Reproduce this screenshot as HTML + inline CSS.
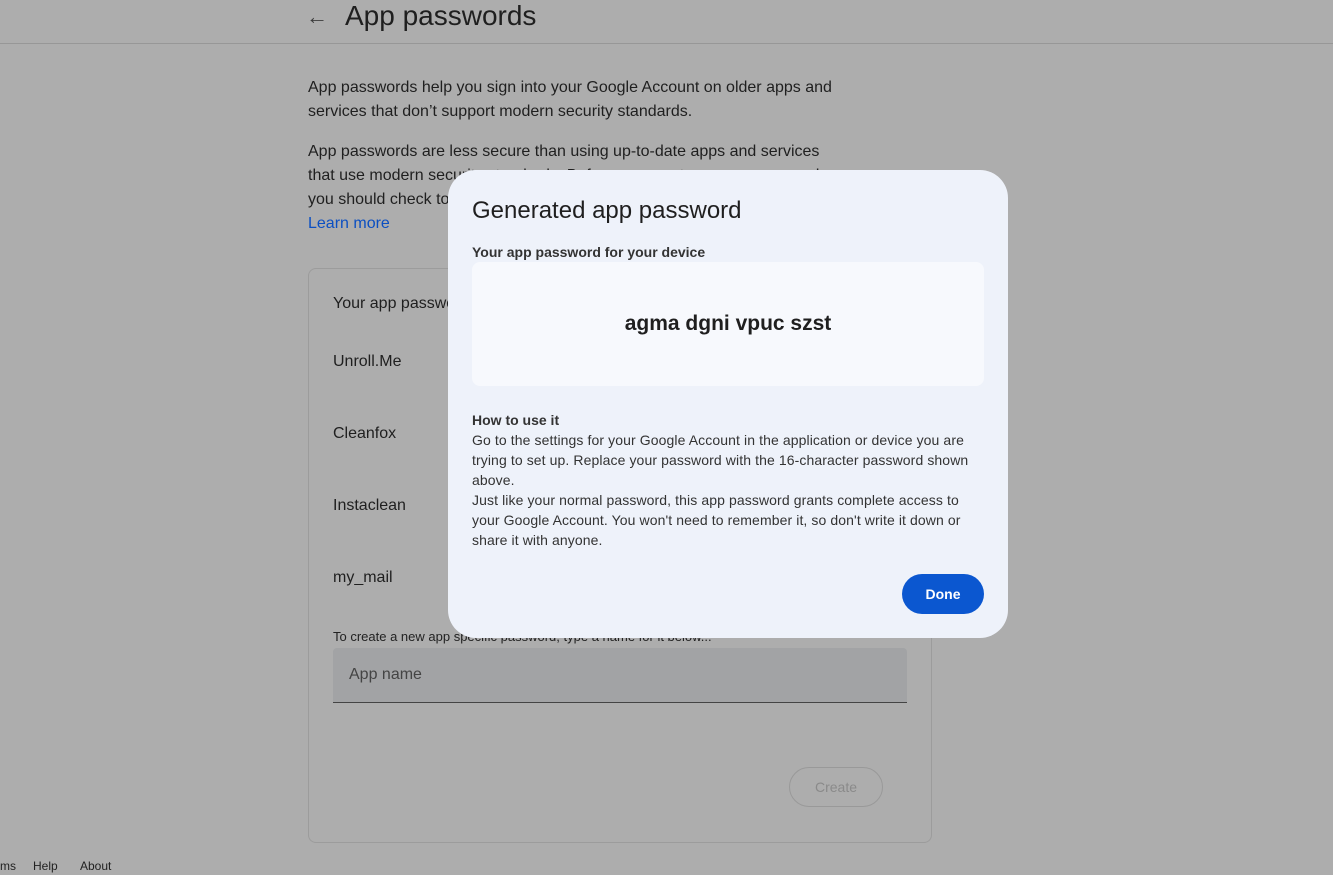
<!DOCTYPE html>
<html><head><meta charset="utf-8"><style>
*{margin:0;padding:0;box-sizing:border-box}
body{width:1333px;height:875px;overflow:hidden;background:#adadad;font-family:"Liberation Sans",Arial,sans-serif;color:#1f1f1f;position:relative}
.abs{position:absolute}
.t{font-size:16px;line-height:24px;color:#1f1f1f}
</style></head><body>
<div class="abs" style="left:306px;top:4px;font-size:22px;color:#3c3c3c">&#8592;</div>
<div class="abs" style="left:345px;top:-1px;font-size:28px;color:#1f1f1f;line-height:34px">App passwords</div>
<div class="abs" style="left:0;top:43px;width:1333px;height:1px;background:#979797"></div>
<div class="abs t" style="left:308px;top:76px;width:545px">App passwords help you sign into your Google Account on older apps and services that don’t support modern security standards.</div>
<div class="abs t" style="left:308px;top:140px;width:530px">App passwords are less secure than using up-to-date apps and services that use modern security standards. Before you create an app password, you should check to</div>
<div class="abs t" style="left:308px;top:212px;color:#0b4fc2">Learn more</div>
<div class="abs" style="left:308px;top:268px;width:624px;height:575px;border:1px solid #9c9c9c;border-radius:8px"></div>
<div class="abs t" style="left:333px;top:292px">Your app passwords</div>
<div class="abs t" style="left:333px;top:350px">Unroll.Me</div>
<div class="abs t" style="left:333px;top:422px">Cleanfox</div>
<div class="abs t" style="left:333px;top:494px">Instaclean</div>
<div class="abs t" style="left:333px;top:566px">my_mail</div>
<div class="abs" style="left:333px;top:629px;font-size:13px;color:#222">To create a new app specific password, type a name for it below...</div>
<div class="abs" style="left:333px;top:648px;width:574px;height:55px;background:#a2a3a5;border-bottom:1px solid #444;border-radius:4px 4px 0 0"></div>
<div class="abs" style="left:349px;top:666px;font-size:16px;color:#444">App name</div>
<div class="abs" style="left:789px;top:767px;width:94px;height:40px;border:1px solid #999;border-radius:20px;text-align:center;line-height:38px;font-size:14px;color:#8a8a8a">Create</div>
<div class="abs" style="left:0;top:859px;font-size:12px;color:#222">ms</div>
<div class="abs" style="left:33px;top:859px;font-size:12px;color:#222">Help</div>
<div class="abs" style="left:80px;top:859px;font-size:12px;color:#222">About</div>

<div class="abs" style="left:448px;top:170px;width:560px;height:468px;background:#eef2fa;border-radius:28px">
  <div class="abs" style="left:24px;top:27px;font-size:24px;color:#1f1f1f">Generated app password</div>
  <div class="abs" style="left:24px;top:74px;font-size:14px;font-weight:bold;color:#333">Your app password for your device</div>
  <div class="abs" style="left:24px;top:92px;width:512px;height:124px;background:#f7f9fd;border-radius:8px;text-align:center;line-height:124px;font-size:21px;font-weight:bold;color:#1f1f1f">agma dgni vpuc szst</div>
  <div class="abs" style="left:24px;top:242px;font-size:14px;font-weight:bold;color:#333">How to use it</div>
  <div class="abs" style="left:24px;top:260px;width:505px;font-size:14px;line-height:20px;letter-spacing:0.1px;color:#333">Go to the settings for your Google Account in the application or device you are trying to set up. Replace your password with the 16-character password shown above.<br>Just like your normal password, this app password grants complete access to your Google Account. You won't need to remember it, so don't write it down or share it with anyone.</div>
  <div class="abs" style="left:454px;top:404px;width:82px;height:40px;background:#0b57d0;border-radius:20px;color:#fff;text-align:center;line-height:40px;font-size:14px;font-weight:bold">Done</div>
</div>
</body></html>
